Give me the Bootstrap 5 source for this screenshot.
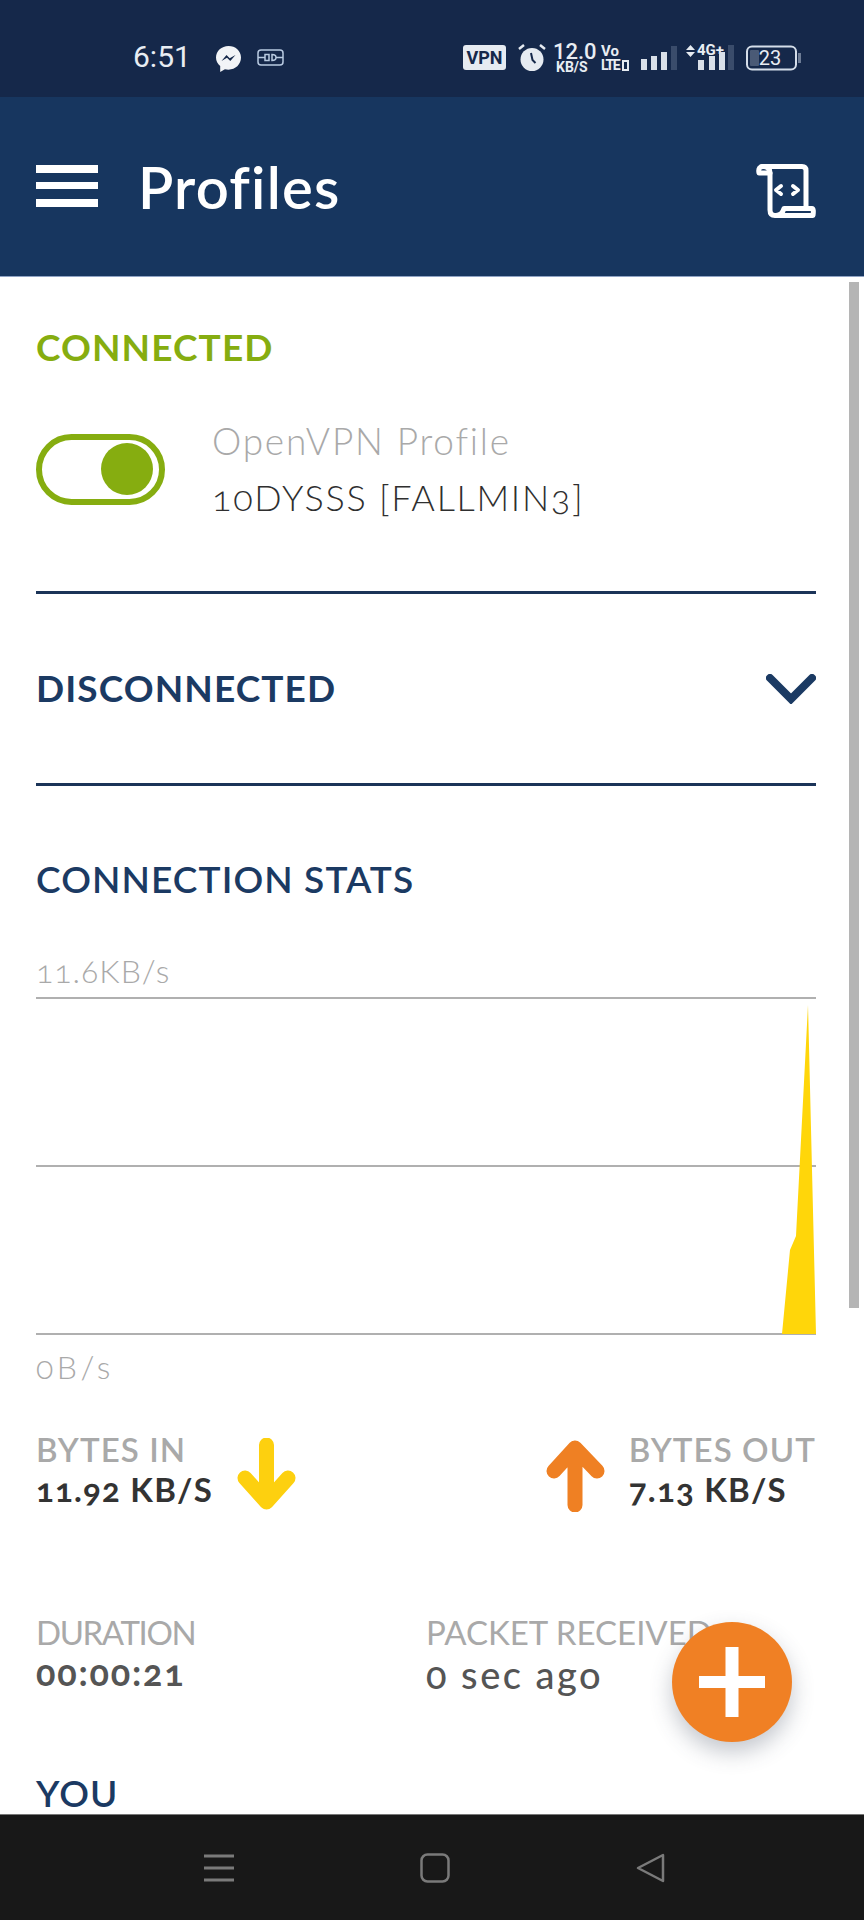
<!DOCTYPE html>
<html lang="en">
<head>
    <meta charset="UTF-8" />
    <title>Profiles</title>
    <link href="https://cdn.jsdelivr.net/npm/bootstrap@5.3.6/dist/css/bootstrap.min.css" rel="stylesheet" />
    <style>
        body { font-family: Lato, "Open Sans", sans-serif; background: #fff; font-feature-settings: "onum"; }
        .pantalla { width: 864px; height: 1920px; overflow: hidden; }

        /* Barra de estado */
        .barra-estado { height: 97px; background: #15284a; color: #e8edf3; font-family: Roboto, sans-serif; flex: none; font-feature-settings: normal; }
        .hora { position: absolute; left: 133px; top: 39px; font-size: 30px; line-height: 36px; }
        .est-icono { position: absolute; }
        .vpn-chip { position: absolute; left: 463px; top: 45px; width: 43px; height: 25px; background: #e6ebf1; color: #15284a; border-radius: 3px; font-size: 18px; font-weight: 700; line-height: 25px; text-align: center; }
        .vel-num { position: absolute; left: 553px; top: 43px; font-size: 22px; line-height: 18px; font-weight: 500; }
        .vel-uni { position: absolute; left: 556px; top: 61px; font-size: 14px; line-height: 12px; font-weight: 700; }
        .volte-a { position: absolute; left: 601px; top: 44px; font-size: 15px; line-height: 14px; font-weight: 700; }
        .volte-b { position: absolute; left: 601px; top: 59px; font-size: 14px; line-height: 12px; font-weight: 700; letter-spacing: -1.5px; }
        .red-4g { position: absolute; left: 697px; top: 44px; font-size: 15px; line-height: 13px; font-weight: 700; }
        .bat-num { position: absolute; left: 746px; top: 46px; width: 48px; text-align: center; font-size: 20px; line-height: 24px; }

        /* Cabecera */
        .cabecera { height: 180px; background: #17365f; padding: 0 48px 0 36px; flex: none; border-bottom: 1px solid #8fa3c4; }
        .cab-titulo { font-size: 58px; font-weight: 600; color: #fff; margin-left: 40px; line-height: 1; letter-spacing: 1.2px; }

        /* Contenido */
        .contenido { padding: 48px 48px 0 36px; overflow: hidden; min-height: 0; }
        .titulo-sec { font-size: 37px; line-height: 44px; font-weight: 700; color: #1b3a63; letter-spacing: 1.1px; }
        .titulo-ok { color: #86ad10; }
        .titulo-medio { font-weight: 600; }
        .fila-perfil { margin-top: 43px; height: 114px; }
        .interruptor { width: 129px; height: 71px; border: 6px solid #86ad10; border-radius: 36px; padding-right: 6px; margin-right: 47px; }
        .interruptor i { width: 52px; height: 52px; border-radius: 50%; background: #86ad10; }
        .perfil-tipo { font-size: 37px; line-height: 57px; font-weight: 300; color: #a9a9a9; letter-spacing: 1.8px; }
        .perfil-nombre { font-size: 36px; line-height: 57px; font-weight: 300; color: #2f2f2f; letter-spacing: 1.7px; }
        .divisor { height: 3px; background: #1b3458; }
        .fila-plegada { height: 189px; }
        .sube-texto { margin-top: -2px; }
        .escala { font-size: 32px; line-height: 40px; font-weight: 300; color: #a9a9a9; letter-spacing: 1px; }
        .escala-cero { letter-spacing: 3.5px; }
        .grafica { display: block; width: 780px; height: 340px; margin-top: 6px; }
        .dato-label { font-size: 33px; line-height: 40px; font-weight: 600; color: #a9a9a9; letter-spacing: 1.1px; }
        .dato-valor { font-size: 33px; line-height: 40px; font-weight: 700; color: #333; letter-spacing: 1.2px; }
        .dato-fino { font-weight: 400; letter-spacing: -1.4px; }
        .dato-paquete { font-weight: 400; letter-spacing: 0; }
        .dato-tiempo { font-size: 36px; font-weight: 700; color: #555; letter-spacing: 1.8px; }
        .dato-medio { font-size: 38px; font-weight: 500; color: #555; letter-spacing: 2.5px; position: relative; top: 2px; }
        .flecha { width: 60px; height: 74px; margin-top: 9px; flex: none; }
        .fondo-scroll { position: absolute; left: 849px; top: 282px; width: 10px; height: 1026px; background: #b5b5b5; }
        .boton-mas { position: absolute; left: 672px; top: 1622px; width: 120px; height: 120px; border-radius: 50%; background: #f08024; box-shadow: 0 10px 22px rgba(60, 70, 90, .3); }

        /* Navegacion */
        .barra-nav { height: 106px; background: #181818; flex: none; border-top: 1px solid #777; }
    </style>
</head>
<body>

<div class="pantalla d-flex flex-column position-relative">

    <!-- Barra de estado -->
    <div class="barra-estado position-relative">
        <span class="hora">6:51</span>
        <svg class="est-icono" style="left:216px;top:46px" width="25" height="26" viewBox="0 0 25 26">
            <path d="M12.5 0C5.6 0 0 5.1 0 11.6c0 3.500 1.600 6.400 4.200 8.400V26l4.700-2.800c1.100.3 2.300.5 3.600.5 6.900 0 12.500-5.200 12.500-12.100S19.400 0 12.500 0z" fill="#f2f4f7"/>
            <path d="M5.500 15l5-6 3.200 3.200 5.800-3.200-5.200 6-3.300-3.200z" fill="#15284a"/>
        </svg>
        <svg class="est-icono" style="left:257px;top:49px" width="27" height="17" viewBox="0 0 27 17" fill="none" stroke="#b9cbe2" stroke-width="1.500">
            <rect x="1" y="1" width="25" height="15" rx="3"/>
            <path d="M1 8.500h7M19 8.500h7M8 5.500h4v6H8zM15 5.500c3 0 4 1.500 4 3s-1 3-4 3z"/>
        </svg>
        <span class="vpn-chip">VPN</span>
        <svg class="est-icono" style="left:518px;top:43px" width="28" height="29" viewBox="0 0 28 29">
            <circle cx="14" cy="16.500" r="11.500" fill="#e6ebf1"/>
            <path d="M1 6l5-4M27 6l-5-4" stroke="#e6ebf1" stroke-width="2.500" fill="none"/>
            <path d="M13 10l1.500 7 3 3" stroke="#15284a" stroke-width="2" fill="none"/>
        </svg>
        <span class="vel-num">12.0</span>
        <span class="vel-uni">KB/S</span>
        <span class="volte-a">Vo</span>
        <span class="volte-b">LTE</span>
        <svg class="est-icono" style="left:622px;top:60px" width="7" height="11" viewBox="0 0 7 11"><rect width="7" height="11" fill="#e6ebf1"/><rect x="2" y="2" width="3" height="7" fill="#15284a"/></svg>
        <svg class="est-icono" style="left:641px;top:46px" width="36" height="24" viewBox="0 0 36 24">
            <rect x="0" y="13" width="6" height="11" fill="#d9e0e9"/>
            <rect x="10" y="10" width="6" height="14" fill="#d9e0e9"/>
            <rect x="20" y="6" width="6" height="18" fill="#d9e0e9"/>
            <rect x="30" y="0" width="6" height="24" fill="#3a4c6b"/>
        </svg>
        <svg class="est-icono" style="left:686px;top:45px" width="9" height="12" viewBox="0 0 9 12" fill="#e6ebf1"><path d="M4.500 0L9 5H0zM0 7h9l-4.500 5z"/></svg>
        <span class="red-4g">4G+</span>
        <svg class="est-icono" style="left:698px;top:45px" width="36" height="25" viewBox="0 0 36 25">
            <rect x="0" y="15" width="6" height="10" fill="#d9e0e9"/>
            <rect x="11" y="11" width="6" height="14" fill="#d9e0e9"/>
            <rect x="21" y="7" width="6" height="18" fill="#d9e0e9"/>
            <rect x="30" y="0" width="6" height="25" fill="#3a4c6b"/>
        </svg>
        <svg class="est-icono" style="left:746px;top:45px" width="55" height="26" viewBox="0 0 55 26">
            <rect x="4" y="5" width="9" height="16" rx="1" fill="#4a5a76"/>
            <rect x="1" y="1.500" width="49" height="23" rx="5" fill="none" stroke="#d4dde9" stroke-width="2"/>
            <rect x="52" y="8" width="3" height="10" fill="#6d7c95"/>
        </svg>
        <span class="bat-num">23</span>
    </div>

    <!-- Cabecera -->
    <div class="cabecera d-flex align-items-center">
        <svg width="62" height="42" viewBox="0 0 62 42" fill="#fff" style="flex:none;margin-top:-1px">
            <rect y="0" width="62" height="8"/><rect y="17" width="62" height="7"/><rect y="34" width="62" height="8"/>
        </svg>
        <span class="cab-titulo">Profiles</span>
        <svg class="ms-auto" width="60" height="54" viewBox="0 0 60 54" fill="none" stroke="#fff" stroke-width="5" stroke-linejoin="round" stroke-linecap="round" style="margin-top:8px">
            <path d="M6 2.500H46Q50 2.500 50 6.500V44"/>
            <path d="M3 9C2 4 4 2.500 7 2.500C11 2.500 14 4 14 9H3Z"/>
            <path d="M14 9V46Q14 51.500 19 51.500H57Q58 44.500 56 44.500H28Q26 51.500 20 51.500"/>
            <path d="M25 22l-5 4 5 4M37 22l5 4-5 4" stroke-width="4"/>
        </svg>
    </div>

    <!-- Contenido -->
    <div class="contenido flex-grow-1">
        <div class="titulo-sec titulo-ok">CONNECTED</div>
        <div class="fila-perfil d-flex align-items-center">
            <div class="interruptor d-flex align-items-center justify-content-end flex-shrink-0"><i></i></div>
            <div>
                <div class="perfil-tipo">OpenVPN Profile</div>
                <div class="perfil-nombre">10DYSSS [FALLMIN3]</div>
            </div>
        </div>
        <div class="divisor" style="margin-top:65px"></div>

        <div class="fila-plegada d-flex align-items-center justify-content-between">
            <span class="titulo-sec sube-texto">DISCONNECTED</span>
            <svg width="50" height="30" viewBox="0 0 50 30" fill="none" stroke="#1b3a63" stroke-width="8" stroke-linecap="round" stroke-linejoin="miter"><path d="M4 4L25 25 46 4"/></svg>
        </div>
        <div class="divisor"></div>

        <div class="titulo-sec titulo-medio" style="margin-top:71px">CONNECTION STATS</div>
        <div class="escala" style="margin-top:50px">11.6KB/s</div>
        <svg class="grafica" viewBox="0 0 780 340">
            <g stroke="#b0b0b0" stroke-width="2">
                <path d="M0 1H780M0 169H780M0 337H780"/>
            </g>
            <path d="M746 337L754 253 760 239 772 8 780 337Z" fill="#ffd60a"/>
        </svg>
        <div class="escala escala-cero" style="margin-top:10px">0B/s</div>

        <div class="d-flex justify-content-between" style="margin-top:42px">
            <div class="d-flex" style="gap:24px">
                <div>
                    <div class="dato-label">BYTES IN</div>
                    <div class="dato-valor">11.92 KB/S</div>
                </div>
                <svg class="flecha" viewBox="0 0 60 74" fill="none" stroke="#fdd00f" stroke-width="15" stroke-linecap="round" stroke-linejoin="round"><path d="M29.500 7V64M8 40L29.500 64 51 40"/></svg>
            </div>
            <div class="d-flex" style="gap:23px">
                <svg class="flecha" viewBox="0 0 60 74" fill="none" stroke="#ef8023" stroke-width="15" stroke-linecap="round" stroke-linejoin="round"><path d="M29 67V10M8 33L29 10 51 33"/></svg>
                <div>
                    <div class="dato-label">BYTES OUT</div>
                    <div class="dato-valor">7.13 KB/S</div>
                </div>
            </div>
        </div>

        <div class="row g-0" style="margin-top:100px">
            <div class="col-6">
                <div class="dato-label dato-fino">DURATION</div>
                <div class="dato-valor dato-tiempo">00:00:21</div>
            </div>
            <div class="col-6">
                <div class="dato-label dato-paquete">PACKET RECEIVED</div>
                <div class="dato-valor dato-medio">0 sec ago</div>
            </div>
        </div>

        <div class="titulo-sec titulo-medio" style="margin-top:79px">YOU</div>
    </div>

    <!-- Navegacion -->
    <div class="barra-nav position-relative">
        <svg class="est-icono" style="left:204px;top:38px" width="30" height="30" viewBox="0 0 30 30" stroke="#7a7a7a" stroke-width="3"><path d="M0 3H30M0 15H30M0 27H30"/></svg>
        <svg class="est-icono" style="left:420px;top:38px" width="30" height="30" viewBox="0 0 30 30" fill="none" stroke="#7a7a7a" stroke-width="2.500"><rect x="1.500" y="1.500" width="27" height="27" rx="6"/></svg>
        <svg class="est-icono" style="left:636px;top:38px" width="30" height="30" viewBox="0 0 30 30" fill="none" stroke="#7a7a7a" stroke-width="2.500" stroke-linejoin="round"><path d="M27 2V28L2 15Z"/></svg>
    </div>

    <!-- Elementos superpuestos -->
    <div class="fondo-scroll"></div>
    <div class="boton-mas d-flex align-items-center justify-content-center">
        <svg width="66" height="70" viewBox="0 0 66 70" fill="#fff"><rect x="26.500" width="13" height="70"/><rect y="29" width="66" height="12"/></svg>
    </div>
</div>

<script src="https://cdn.jsdelivr.net/npm/bootstrap@5.3.6/dist/js/bootstrap.bundle.min.js"></script>
</body>
</html>
